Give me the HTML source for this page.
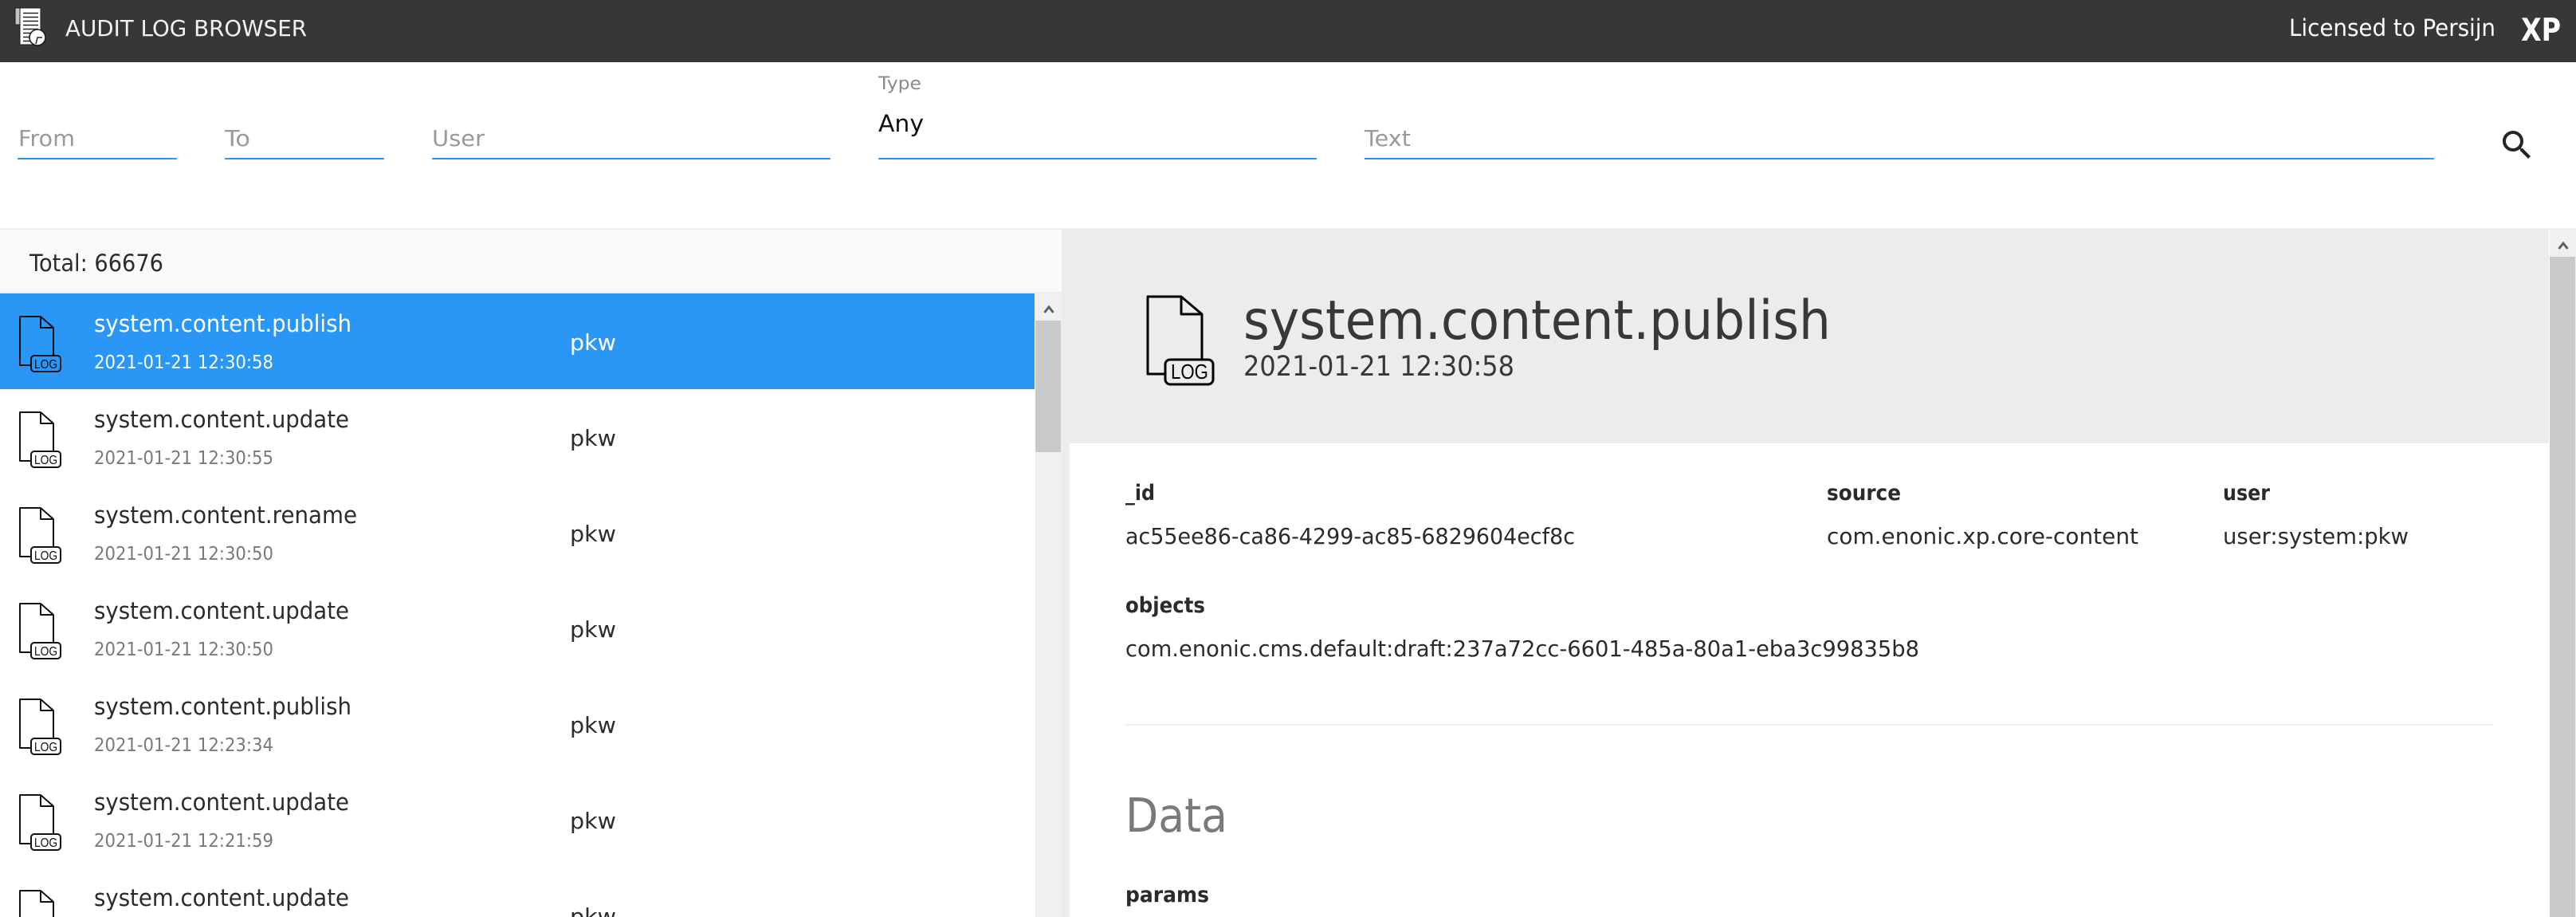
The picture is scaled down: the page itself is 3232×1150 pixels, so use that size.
<!DOCTYPE html>
<html lang="en"><head><meta charset="utf-8"><title>Audit Log Browser</title>
<style>
html,body{margin:0;padding:0;width:3232px;height:1150px;overflow:hidden;background:#fff}
.b{position:absolute}
svg{position:absolute;left:0;top:0}
text{font-family:"DejaVu Sans","Liberation Sans",sans-serif}
.l{font-family:"Liberation Sans",sans-serif}
.t{font-size:29px;fill:#2b2b2b}
.d{font-size:23.5px;fill:#7c7872}
.u{font-size:27.5px;fill:#2b2b2b}
.k{font-size:27px;font-weight:bold;fill:#2b2b2b}
.v{font-size:27.5px;fill:#2b2b2b}
.p{font-size:27.5px;fill:#9a9a9a}
.i{fill:none;stroke:#111;stroke-width:2;stroke-linejoin:round}
.g{font-family:"Liberation Sans",sans-serif;font-size:16px;fill:#111}
</style></head><body>
<div class="b" style="left:0;top:0;width:3232px;height:78px;background:#373737"></div>
<div class="b" style="left:22px;top:198px;width:200px;height:2px;background:#2b96f3"></div>
<div class="b" style="left:282px;top:198px;width:200px;height:2px;background:#2b96f3"></div>
<div class="b" style="left:542px;top:198px;width:500px;height:2px;background:#2b96f3"></div>
<div class="b" style="left:1102px;top:198px;width:550px;height:2px;background:#2b96f3"></div>
<div class="b" style="left:1712px;top:198px;width:1342px;height:2px;background:#2b96f3"></div>
<div class="b" style="left:0;top:286px;width:3232px;height:2px;background:#eeeeee"></div>
<div class="b" style="left:0;top:288px;width:1332px;height:78px;background:#fafafa"></div>
<div class="b" style="left:0;top:366px;width:1332px;height:2px;background:#eeeeee"></div>
<div class="b" style="left:0;top:368px;width:1298px;height:120px;background:#2a96f5"></div>
<div class="b" style="left:1299px;top:368px;width:33px;height:782px;background:#f0f0f0"></div>
<div class="b" style="left:1299px;top:402px;width:32px;height:165px;background:#c9c9c9"></div>
<div class="b" style="left:1332px;top:286px;width:1866px;height:864px;background:#ececec"></div>
<div class="b" style="left:1342px;top:556px;width:1856px;height:594px;background:#fff"></div>
<div class="b" style="left:1412px;top:908px;width:1715px;height:2px;background:#eeeeee"></div>
<div class="b" style="left:3198px;top:288px;width:1px;height:862px;background:#fff"></div>
<div class="b" style="left:3199px;top:288px;width:33px;height:862px;background:#f0f0f0"></div>
<div class="b" style="left:3199px;top:322px;width:32px;height:828px;background:#c9c9c9"></div>

<svg width="3232" height="1150" viewBox="0 0 3232 1150" xmlns="http://www.w3.org/2000/svg">
<!-- app icon -->
<rect x="19" y="10" width="7" height="21" fill="#c4c4c4" stroke="#1c1c1c" stroke-width="1"/>
<rect x="25" y="10" width="26" height="46" fill="#fff" stroke="#1c1c1c" stroke-width="1"/>
<path d="M29 16.5H48M29 21.5H48M29 26.5H48M29 31.5H48M29 36.5H48M29 41.5H40M29 46.5H38M29 51.5H38" stroke="#222" stroke-width="1.6" fill="none"/>
<circle cx="47" cy="47" r="10" fill="#fff" stroke="#1c1c1c" stroke-width="1.6"/>
<path d="M45 55L47 47H53" fill="none" stroke="#222" stroke-width="1.5"/>

<text x="82" y="45" font-size="27.5" fill="#f2f2f2" textLength="303" lengthAdjust="spacingAndGlyphs">AUDIT LOG BROWSER</text>
<text x="2872" y="45" font-size="29" fill="#ffffff" textLength="259" lengthAdjust="spacingAndGlyphs">Licensed to Persijn</text>
<text x="3163" y="51" font-size="39" font-weight="bold" fill="#ffffff" textLength="50" lengthAdjust="spacingAndGlyphs">XP</text>

<text class="p" x="23" y="183" textLength="71" lengthAdjust="spacingAndGlyphs">From</text>
<text class="p" x="282" y="183" textLength="32" lengthAdjust="spacingAndGlyphs">To</text>
<text class="p" x="542" y="183" textLength="66" lengthAdjust="spacingAndGlyphs">User</text>
<text x="1102" y="112" font-size="22" fill="#8a8a8a" textLength="54" lengthAdjust="spacingAndGlyphs">Type</text>
<text x="1102" y="165" font-size="29" fill="#111" textLength="57" lengthAdjust="spacingAndGlyphs">Any</text>
<text class="p" x="1712" y="183" textLength="58" lengthAdjust="spacingAndGlyphs">Text</text>
<path transform="translate(3134 158) scale(2)" fill="#262626" d="M15.5 14h-.79l-.28-.27C15.41 12.59 16 11.11 16 9.5 16 5.91 13.09 3 9.5 3S3 5.91 3 9.5 5.91 16 9.5 16c1.61 0 3.09-.59 4.23-1.57l.27.28v.79l5 4.99L20.49 19l-4.99-5zm-6 0C7.01 14 5 11.99 5 9.5S7.01 5 9.5 5 14 7.01 14 9.5 11.99 14 9.5 14z"/>

<text x="37" y="340" font-size="29.5" fill="#2b2b2b" textLength="168" lengthAdjust="spacingAndGlyphs">Total: 66676</text>

<!-- row 1 -->
<path class="i" d="M39 458H25V397H51L67 411V446M51 397V411H67"/>
<rect class="i" x="39" y="446" width="37" height="20" rx="4"/>
<text class="g" x="43" y="462" textLength="29" lengthAdjust="spacingAndGlyphs">LOG</text>
<text class="t" x="118" y="416" style="fill:#fff" textLength="323" lengthAdjust="spacingAndGlyphs">system.content.publish</text>
<text class="d" x="118" y="462" style="fill:#fff" textLength="225" lengthAdjust="spacingAndGlyphs">2021-01-21 12:30:58</text>
<text class="u" x="715" y="439" style="fill:#fff" textLength="58" lengthAdjust="spacingAndGlyphs">pkw</text>
<!-- row 2 -->
<path class="i" d="M39 578H25V517H51L67 531V566M51 517V531H67"/>
<rect class="i" x="39" y="566" width="37" height="20" rx="4" style="fill:#fff"/>
<text class="g" x="43" y="582" textLength="29" lengthAdjust="spacingAndGlyphs">LOG</text>
<text class="t" x="118" y="536" textLength="320" lengthAdjust="spacingAndGlyphs">system.content.update</text>
<text class="d" x="118" y="582" textLength="225" lengthAdjust="spacingAndGlyphs">2021-01-21 12:30:55</text>
<text class="u" x="715" y="559" textLength="58" lengthAdjust="spacingAndGlyphs">pkw</text>
<!-- row 3 -->
<path class="i" d="M39 698H25V637H51L67 651V686M51 637V651H67"/>
<rect class="i" x="39" y="686" width="37" height="20" rx="4" style="fill:#fff"/>
<text class="g" x="43" y="702" textLength="29" lengthAdjust="spacingAndGlyphs">LOG</text>
<text class="t" x="118" y="656" textLength="330" lengthAdjust="spacingAndGlyphs">system.content.rename</text>
<text class="d" x="118" y="702" textLength="225" lengthAdjust="spacingAndGlyphs">2021-01-21 12:30:50</text>
<text class="u" x="715" y="679" textLength="58" lengthAdjust="spacingAndGlyphs">pkw</text>
<!-- row 4 -->
<path class="i" d="M39 818H25V757H51L67 771V806M51 757V771H67"/>
<rect class="i" x="39" y="806" width="37" height="20" rx="4" style="fill:#fff"/>
<text class="g" x="43" y="822" textLength="29" lengthAdjust="spacingAndGlyphs">LOG</text>
<text class="t" x="118" y="776" textLength="320" lengthAdjust="spacingAndGlyphs">system.content.update</text>
<text class="d" x="118" y="822" textLength="225" lengthAdjust="spacingAndGlyphs">2021-01-21 12:30:50</text>
<text class="u" x="715" y="799" textLength="58" lengthAdjust="spacingAndGlyphs">pkw</text>
<!-- row 5 -->
<path class="i" d="M39 938H25V877H51L67 891V926M51 877V891H67"/>
<rect class="i" x="39" y="926" width="37" height="20" rx="4" style="fill:#fff"/>
<text class="g" x="43" y="942" textLength="29" lengthAdjust="spacingAndGlyphs">LOG</text>
<text class="t" x="118" y="896" textLength="323" lengthAdjust="spacingAndGlyphs">system.content.publish</text>
<text class="d" x="118" y="942" textLength="225" lengthAdjust="spacingAndGlyphs">2021-01-21 12:23:34</text>
<text class="u" x="715" y="919" textLength="58" lengthAdjust="spacingAndGlyphs">pkw</text>
<!-- row 6 -->
<path class="i" d="M39 1058H25V997H51L67 1011V1046M51 997V1011H67"/>
<rect class="i" x="39" y="1046" width="37" height="20" rx="4" style="fill:#fff"/>
<text class="g" x="43" y="1062" textLength="29" lengthAdjust="spacingAndGlyphs">LOG</text>
<text class="t" x="118" y="1016" textLength="320" lengthAdjust="spacingAndGlyphs">system.content.update</text>
<text class="d" x="118" y="1062" textLength="225" lengthAdjust="spacingAndGlyphs">2021-01-21 12:21:59</text>
<text class="u" x="715" y="1039" textLength="58" lengthAdjust="spacingAndGlyphs">pkw</text>
<!-- row 7 -->
<path class="i" d="M25 1150V1117H51L67 1131V1150M51 1117V1131H67"/>
<text class="t" x="118" y="1136" textLength="320" lengthAdjust="spacingAndGlyphs">system.content.update</text>
<text class="u" x="715" y="1159" textLength="58" lengthAdjust="spacingAndGlyphs">pkw</text>

<!-- scroll arrows -->
<path d="M1310.5 392L1316 385L1321.5 392" fill="none" stroke="#606060" stroke-width="3"/>
<path d="M3210.5 312L3216 305L3221.5 312" fill="none" stroke="#606060" stroke-width="3"/>

<!-- detail header -->
<path d="M1462 469H1440V372H1482L1508 394V451M1482 372V394H1508" fill="none" stroke="#000" stroke-width="3" stroke-linejoin="round"/>
<rect x="1462" y="451" width="60" height="31" rx="6" fill="none" stroke="#000" stroke-width="3"/>
<text x="1469" y="475" font-size="26" fill="#000" class="l" textLength="47" lengthAdjust="spacingAndGlyphs">LOG</text>
<text x="1560" y="425" font-size="68" fill="#383838" textLength="737" lengthAdjust="spacingAndGlyphs">system.content.publish</text>
<text x="1560" y="471" font-size="35" fill="#383838" textLength="340" lengthAdjust="spacingAndGlyphs">2021-01-21 12:30:58</text>

<!-- detail fields -->
<text class="k" x="1412" y="627" textLength="37" lengthAdjust="spacingAndGlyphs">_id</text>
<text class="v" x="1412" y="682" textLength="564" lengthAdjust="spacingAndGlyphs">ac55ee86-ca86-4299-ac85-6829604ecf8c</text>
<text class="k" x="2292" y="627" textLength="93" lengthAdjust="spacingAndGlyphs">source</text>
<text class="v" x="2292" y="682" textLength="391" lengthAdjust="spacingAndGlyphs">com.enonic.xp.core-content</text>
<text class="k" x="2789" y="627" textLength="59" lengthAdjust="spacingAndGlyphs">user</text>
<text class="v" x="2789" y="682" textLength="233" lengthAdjust="spacingAndGlyphs">user:system:pkw</text>
<text class="k" x="1412" y="768" textLength="100" lengthAdjust="spacingAndGlyphs">objects</text>
<text class="v" x="1412" y="823" textLength="996" lengthAdjust="spacingAndGlyphs">com.enonic.cms.default:draft:237a72cc-6601-485a-80a1-eba3c99835b8</text>
<text x="1412" y="1043" font-size="58.5" fill="#7a7a7a" textLength="128" lengthAdjust="spacingAndGlyphs">Data</text>
<text class="k" x="1412" y="1131" textLength="105" lengthAdjust="spacingAndGlyphs">params</text>
</svg>
</body></html>
